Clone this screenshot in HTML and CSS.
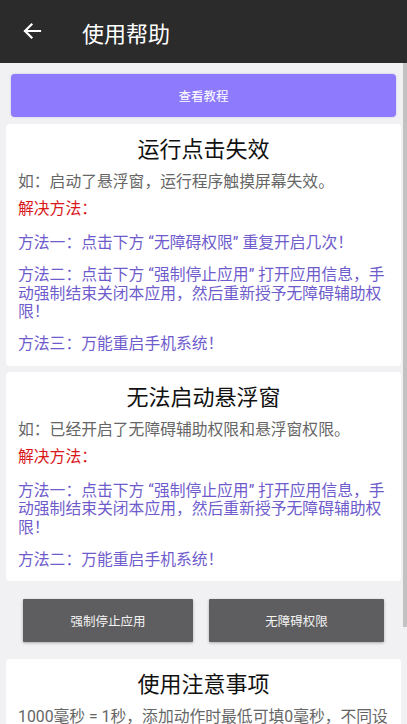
FILE: index.html
```html
<!DOCTYPE html>
<html lang="zh-CN">
<head>
    <meta charset="UTF-8">
    <meta name="viewport" content="width=device-width, initial-scale=1.0">
    <title>使用帮助</title>
    <link rel="stylesheet" href="styles.css">
</head>
<body>

    <div class="toolbar">
        <svg class="back" width="20" height="20" viewBox="0 0 20 20">
            <path d="M18 10H3M9.5 3.5L3 10l6.5 6.5" fill="none" stroke="#fff" stroke-width="2.2" stroke-linecap="square"/>
        </svg>
        <span class="toolbar-title">使用帮助</span>
    </div>

    <div class="content">
        <button class="btn-tutorial" type="button">查看教程</button>

        <div class="card">
            <div class="card-title">运行点击失效</div>
            <p class="desc">如：启动了悬浮窗，运行程序触摸屏幕失效。</p>
            <p class="solution">解决方法：</p>
            <p class="method">方法一：点击下方 “无障碍权限” 重复开启几次！</p>
            <p class="method">方法二：点击下方 “强制停止应用” 打开应用信息，手动强制结束关闭本应用，然后重新授予无障碍辅助权限！</p>
            <p class="method">方法三：万能重启手机系统！</p>
        </div>

        <div class="card">
            <div class="card-title">无法启动悬浮窗</div>
            <p class="desc">如：已经开启了无障碍辅助权限和悬浮窗权限。</p>
            <p class="solution">解决方法：</p>
            <p class="method">方法一：点击下方 “强制停止应用” 打开应用信息，手动强制结束关闭本应用，然后重新授予无障碍辅助权限！</p>
            <p class="method">方法二：万能重启手机系统！</p>
        </div>

        <div class="actions">
            <button class="btn-gray" type="button">强制停止应用</button>
            <button class="btn-gray" type="button">无障碍权限</button>
        </div>

        <div class="card">
            <div class="card-title">使用注意事项</div>
            <p class="desc">1000毫秒 = 1秒，添加动作时最低可填0毫秒，不同设备性能不同，请根据实际情况调整延时。</p>
        </div>
    </div>

    <div class="scrollbar"></div>

</body>
</html>
```

FILE: styles.css
```css
body {
    margin: 0;
    height: 724px;
    overflow: hidden;
    background-color: #f1f1f4;
    font-family: Roboto, "Noto Sans CJK SC", sans-serif;
    position: relative;
}

.toolbar {
    height: 63px;
    background-color: #2b2b2b;
    display: flex;
    align-items: center;
    padding-left: 22px;
}

.back {
    display: block;
    margin-top: -1px;
}

.toolbar-title {
    color: white;
    font-size: 22px;
    margin-left: 40px;
    margin-top: 1px;
}

.content {
    padding: 11px 6px 0 6px;
}

.btn-tutorial {
    display: block;
    width: calc(100% - 10px);
    margin: 0 5px;
    height: 43px;
    border: none;
    border-radius: 4px;
    background-color: #8e7afd;
    color: white;
    font-family: inherit;
    font-size: 12.5px;
    box-shadow: 0px 0px 2px rgba(90, 70, 200, 0.35);
}

.card {
    background-color: white;
    border-radius: 4px;
    padding: 13px 8px 12px 12px;
    margin-top: 7px;
}

.card + .card {
    margin-top: 6px;
}

.card-title {
    text-align: center;
    font-size: 22px;
    line-height: 26px;
    color: #111;
    margin-bottom: 10px;
    padding-right: 4px;
}

.card p {
    margin: 0;
    font-size: 15.8px;
    line-height: 18.5px;
}

.desc {
    color: #666;
}

.solution {
    color: #d8181a;
    margin-top: 8.5px !important;
}

.method {
    color: #6f5ccc;
    margin-top: 13.5px !important;
}

.solution + .method {
    margin-top: 15.5px !important;
}

.actions {
    display: grid;
    grid-template-columns: 170px 175px;
    gap: 16px;
    padding: 18px 17px 17px 17px;
}

.actions + .card {
    margin-top: 0;
}

.btn-gray {
    height: 43px;
    border: none;
    border-radius: 1px;
    background-color: #5e5e60;
    color: #f4f4f4;
    font-family: inherit;
    font-size: 12.5px;
    box-shadow: 0px 1px 3px rgba(0, 0, 0, 0.3);
}

.scrollbar {
    position: absolute;
    right: 0;
    top: 63px;
    width: 4px;
    height: 564px;
    background-color: #c2c2c2;
}
```
